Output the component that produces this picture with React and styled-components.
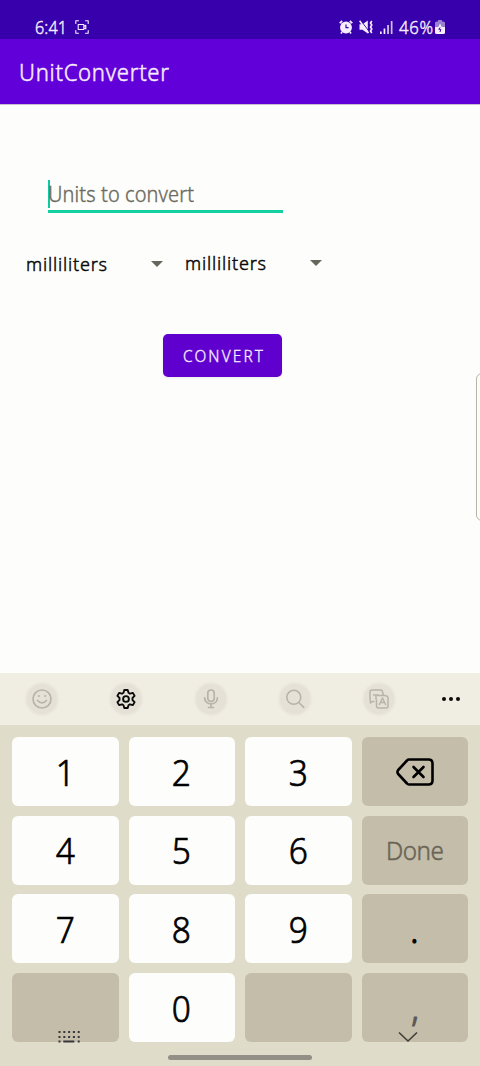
import React from 'react';
import styled, { createGlobalStyle } from 'styled-components';

const Global = createGlobalStyle`
  * { box-sizing: border-box; }
  body { margin: 0; background: #fdfdfb; font-family: "Noto Sans", sans-serif; }
`;

const Screen = styled.div`
  width: 480px;
  height: 1066px;
  display: flex;
  flex-direction: column;
  position: relative;
  overflow: hidden;
  background: #fdfdfb;
`;

const StatusBar = styled.header`
  height: 39px;
  flex: none;
  background: #3700ac;
  color: #f6eefc;
  padding: 15px 35px 0 35px;
  display: flex;
  align-items: flex-start;
  justify-content: space-between;
`;

const StatusGroup = styled.div`
  display: flex;
  align-items: center;
  height: 24px;
  gap: ${(p) => p.$gap}px;
`;

const AppBar = styled.div`
  height: 66px;
  flex: none;
  background: #6200da;
  padding: 1px 19px 0;
  display: flex;
  align-items: center;
  border-bottom: 1px solid #c9c0cf;
`;

const LabelSvg = styled.svg`
  display: block;
  flex: none;
  overflow: visible;
  font-weight: 300;
`;

/* Slightly condensed label, tracked out to a fixed drawn width; the thin stroke thickens the light face. */
const Label = ({ width, size, color, squeeze = 0.9, bold = 0.4, text }) => (
  <LabelSvg width={width} height={Math.round(size * 1.4)} fill={color} stroke={color} strokeWidth={bold}>
    <text
      y={size * 1.05}
      fontSize={size}
      transform={`scale(${squeeze} 1)`}
      textLength={width / squeeze}
      lengthAdjust="spacing"
    >
      {text}
    </text>
  </LabelSvg>
);

const Content = styled.main`
  height: 568px;
  flex: none;
  padding-top: 75px;
`;

const Field = styled.div`
  margin-left: 48px;
  width: 235px;
  height: 33px;
  border-bottom: 3px solid #14cf9f;
  display: flex;
  align-items: flex-start;
`;

const Caret = styled.span`
  width: 2px;
  height: 28px;
  margin-right: -2px;
  background: #0fc9a0;
`;

const Spinners = styled.div`
  display: flex;
  margin: 36px 0 0 26px;
`;

const Spinner = styled.div`
  width: 159px;
  height: 28px;
  display: flex;
  align-items: center;
  gap: 44px;
  margin-top: ${(p) => p.$drop || 0}px;
`;

const Arrow = styled.span`
  border: 6px solid transparent;
  border-top-color: #66665a;
  border-bottom: 0;
`;

const ConvertButton = styled.button`
  display: flex;
  align-items: center;
  justify-content: center;
  width: 119px;
  height: 43px;
  margin: 56px 0 0 163px;
  padding: 2px 0 0;
  border: 0;
  border-radius: 5px;
  background: #6000ce;
  font-family: inherit;
  box-shadow: 0 1px 3px rgba(0, 0, 0, 0.08);
`;

const EdgePanel = styled.div`
  position: absolute;
  left: 476px;
  top: 373px;
  width: 12px;
  height: 148px;
  border: 1px solid #b9b4a4;
  border-radius: 6px;
  background: #fdfdfb;
`;

const Toolbar = styled.nav`
  height: 52px;
  flex: none;
  background: #f0eee3;
  padding: 0 11px 1px 24px;
  display: flex;
  align-items: center;
  gap: 48.3px;
`;

const Tool = styled.div`
  width: 36px;
  height: 36px;
  flex: none;
  border-radius: 50%;
  display: grid;
  place-items: center;
  color: ${(p) => (p.$active ? '#0a0a0a' : '#b8b4a8')};
  background: ${(p) => (p.$plain ? 'transparent' : 'radial-gradient(closest-side, #e6e1d6 80%, #f0eee3)')};
  margin-left: ${(p) => (p.$plain ? '-12.5px' : 0)};
`;

const Keyboard = styled.section`
  flex: 1;
  background: #dfdcca;
  padding: 12px 12px 0;
`;

const Keys = styled.div`
  display: grid;
  grid-template-columns: repeat(4, 106.5px);
  grid-auto-rows: 69px;
  column-gap: 10px;
  row-gap: 9.7px;
`;

const Key = styled.div`
  display: flex;
  align-items: center;
  justify-content: center;
  padding-top: ${(p) => (p.$flush ? 0 : 2)}px;
  border-radius: 6px;
  font-size: 36px;
  color: ${(p) => p.$color || '#000'};
  background: ${(p) => (p.$dark ? '#c4bdaa' : '#fdfdfb')};
`;

const Digit = styled.span`
  line-height: 1;
  font-weight: 300;
  -webkit-text-stroke: ${(p) => p.$bold || 0.7}px currentColor;
  transform: scaleX(0.93);
`;

const NavRow = styled.div`
  position: absolute;
  left: 58px;
  right: 62px;
  top: 1030px;
  height: 16px;
  display: flex;
  justify-content: space-between;
`;

const HomeBar = styled.div`
  position: absolute;
  left: 168px;
  top: 1055px;
  width: 144px;
  height: 5px;
  border-radius: 3px;
  background: #929086;
`;

const Icon = ({ size = 24, sw = 1.7, children, height, box = '0 0 24 24' }) => (
  <svg width={size} height={height || size} viewBox={box} fill="none" stroke="currentColor" strokeWidth={sw} strokeLinecap="round" strokeLinejoin="round">{children}</svg>
);

const CaptureIcon = () => (
  <Icon size={14} sw={1.1} box="0 0 14 14">
    <path d="M.8 3.5V.8h2.7M10.5.8h2.7v2.7M13.2 10.5v2.7h-2.7M3.5 13.2H.8v-2.7M3.2 4.5h5.6v5H3.2zM8.8 6.5l2-1.2v3.6l-2-1.2" />
  </Icon>
);

const AlarmIcon = () => (
  <svg width="14" height="14" viewBox="0 0 14 14">
    <circle cx="7" cy="7.5" r="5.9" fill="currentColor" />
    <path d="M.7 3.2L3.2 1M13.3 3.2L10.8 1M3 12l-1 1.4M11 12l1 1.4" stroke="currentColor" strokeWidth="1.7" />
    <path d="M7 4.5v3.2h2.6" stroke="#3700ac" strokeWidth="1.2" fill="none" />
  </svg>
);

const MuteIcon = () => (
  <svg width="14" height="14" viewBox="0 0 14 14">
    <path d="M.5 4.3h3L8.8.5v13L3.5 9.7h-3z" fill="currentColor" />
    <path d="M1.8.6L10.5 12" stroke="#3700ac" strokeWidth="1" />
    <path d="M.6.8L9.5 13" stroke="currentColor" strokeWidth="1.5" />
    <path d="M12.8 1l-1.3 2 1.3 2-1.3 2 1.3 2-1.3 2 1.3 2" stroke="currentColor" fill="none" strokeWidth="1.6" />
  </svg>
);

const SignalIcon = () => (
  <svg width="13" height="14" viewBox="0 0 13 14" fill="currentColor">
    <rect x="0" y="11.5" width="1.7" height="2.5" />
    <rect x="3.6" y="8.5" width="1.7" height="5.5" />
    <rect x="7.2" y="5" width="1.7" height="9" opacity=".85" />
    <rect x="10.8" y="1" width="1.7" height="13" opacity=".8" />
  </svg>
);

const BatteryIcon = () => (
  <svg width="10" height="14" viewBox="0 0 10 14">
    <path d="M3 0h4v1.5h1.5Q10 1.5 10 3v5H0V3q0-1.5 1.5-1.5H3z" fill="#9a80d0" />
    <path d="M0 7h10v5.5q0 1.5-1.5 1.5h-7Q0 14 0 12.5z" fill="currentColor" />
    <path d="M5 3.5L2.5 8.5h5z" fill="currentColor" />
    <path d="M5 7.5L3.8 9.3h2L5 12" stroke="#3700ac" strokeWidth="1" fill="none" />
  </svg>
);

const SmileIcon = () => (
  <Icon size={20} sw={1.7} box="0 0 20 20">
    <circle cx="10" cy="10" r="9" />
    <path d="M5.5 11.5q4.5 4.8 9 0" />
    <path d="M6.8 7h.1M13.2 7h.1" strokeWidth="2" />
  </Icon>
);

const GearIcon = () => (
  <Icon size={20} sw={1.9} box="0 0 20 20">
    <path d="M8.3 1h3.4l.8 2.8 1.5.9 2.9-.8 1.7 3-2.1 2v2.2l2.1 2-1.7 3-2.9-.8-1.5.9-.8 2.8H8.3l-.8-2.8-1.5-.9-2.9.8-1.7-3 2.100-2V8.9l-2.100-2 1.700-3 2.900.8 1.500-.9z" />
    <circle cx="10" cy="10" r="2.9" />
  </Icon>
);

const MicIcon = () => (
  <Icon size={16} height={20} sw={1.7} box="0 0 16 20">
    <rect x="4.8" y="1" width="6.4" height="11.4" rx="3.2" />
    <path d="M1.6 8.8c0 8.2 12.8 8.2 12.8 0M8 15v3M5.5 18.5h5" />
  </Icon>
);

const SearchIcon = () => (
  <Icon size={20} sw={1.6} box="0 0 20 20">
    <circle cx="8.8" cy="8.3" r="7" />
    <path d="M13.8 13.5l5 4.8" />
  </Icon>
);

const TranslateIcon = () => (
  <Icon size={20} sw={1.5} box="0 0 20 20">
    <path d="M5 12.5H3.5L1.5 14v-2.5Q1 11 1 10V3q0-2 2-2h8.5q2 0 2 2l.8 3M4.5 6H9M7 6v4" />
    <path d="M9 6.5h6.5q3.500 0 3.500 3V17q0 2-2 2H9.500q-2 0-2-2V11M10.500 15.500L13.500 9l3 6.500M11.500 13.500h4" />
  </Icon>
);

const MoreIcon = () => (
  <svg width="18" height="4" viewBox="0 0 18 4" fill="currentColor">
    <circle cx="2" cy="2" r="2" /><circle cx="9" cy="2" r="2" /><circle cx="16" cy="2" r="2" />
  </svg>
);

const BackspaceIcon = () => (
  <Icon size={38} height={28} sw={2.6} box="0 0 38 28">
    <path d="M13 1.5h19.500q4 0 4 4v17q0 4-4 4H13q-1.200 0-2-1L2.200 16q-1.500-2 0-4L11 2.500q.8-1 2-1z" />
    <path d="M17.500 9l10 10M27.500 9l-10 10" />
  </Icon>
);

const columns = [0, 1, 2, 3, 4];

const KeyboardIcon = () => (
  <svg width="22" height="14" viewBox="0 0 22 14" fill="#37363a">
    {columns.map((c) => <rect key={c} x={0.5 + c * 4.8} y="1" width="2" height="2" />)}
    {columns.map((c) => <rect key={c} x={0.5 + c * 4.8} y="6" width="2" height="2" />)}
    <rect x=".5" y="10.5" width="2" height="2" /><rect x="5.3" y="10.5" width="11" height="2" /><rect x="19.7" y="10.5" width="2" height="2" />
  </svg>
);

const ChevronIcon = () => (
  <svg width="20" height="14" viewBox="0 0 20 14" fill="none" stroke="#3b3a36" strokeWidth="1.5">
    <path d="M1 2.5l9 8.500 9-8.500" />
  </svg>
);

export default function App() {
  return (
    <Screen>
      <Global />
      <StatusBar>
        <StatusGroup $gap={8}>
          <Label width={32} size={18} color="#f6eefc" text="6:41" />
          <CaptureIcon />
        </StatusGroup>
        <StatusGroup $gap={6.5}>
          <AlarmIcon />
          <MuteIcon />
          <SignalIcon />
          <StatusGroup $gap={2}>
            <Label width={34} size={18} squeeze={0.93} color="#f6eefc" text="46%" />
            <BatteryIcon />
          </StatusGroup>
        </StatusGroup>
      </StatusBar>
      <AppBar><Label width={150} size={23.5} squeeze={0.94} bold={0.5} color="#f6ebff" text="UnitConverter" /></AppBar>
      <Content>
        <Field>
          <Caret />
          <Label width={146} size={21} squeeze={0.95} color="#6c6b60" text="Units to convert" />
        </Field>
        <Spinners>
          <Spinner $drop={1}><Label width={81} size={19} squeeze={0.95} bold={0.5} color="#080808" text="milliliters" /><Arrow /></Spinner>
          <Spinner><Label width={81} size={19} squeeze={0.95} bold={0.5} color="#080808" text="milliliters" /><Arrow /></Spinner>
        </Spinners>
        <ConvertButton><Label width={80} size={16.5} squeeze={0.93} bold={0.35} color="#f5eaff" text="CONVERT" /></ConvertButton>
      </Content>
      <EdgePanel />
      <Toolbar>
        <Tool><SmileIcon /></Tool>
        <Tool $active><GearIcon /></Tool>
        <Tool><MicIcon /></Tool>
        <Tool><SearchIcon /></Tool>
        <Tool><TranslateIcon /></Tool>
        <Tool $active $plain><MoreIcon /></Tool>
      </Toolbar>
      <Keyboard>
        <Keys>
          <Key><Digit>1</Digit></Key>
          <Key><Digit>2</Digit></Key>
          <Key><Digit>3</Digit></Key>
          <Key $dark $flush><BackspaceIcon /></Key>
          <Key><Digit>4</Digit></Key>
          <Key><Digit>5</Digit></Key>
          <Key><Digit>6</Digit></Key>
          <Key $dark><Label width={58} size={25.5} squeeze={0.95} bold={0.5} color="#696556" text="Done" /></Key>
          <Key><Digit>7</Digit></Key>
          <Key><Digit>8</Digit></Key>
          <Key><Digit>9</Digit></Key>
          <Key $dark><Digit $bold={1.2}>.</Digit></Key>
          <Key $dark />
          <Key><Digit>0</Digit></Key>
          <Key $dark />
          <Key $dark $flush $color="#5b5957"><Digit $bold={1.2}>,</Digit></Key>
        </Keys>
      </Keyboard>
      <NavRow><KeyboardIcon /><ChevronIcon /></NavRow>
      <HomeBar />
    </Screen>
  );
}
